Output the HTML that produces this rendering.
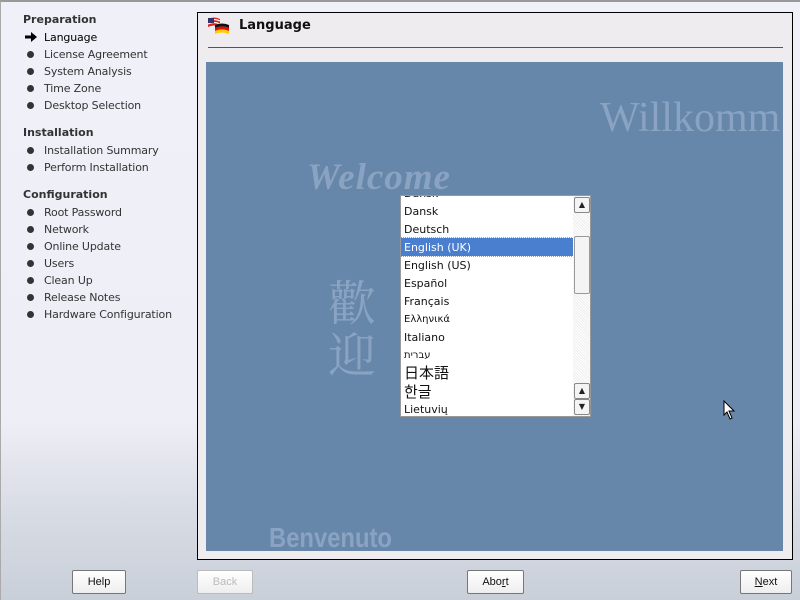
<!DOCTYPE html>
<html><head><meta charset="utf-8"><style>
*{margin:0;padding:0;box-sizing:border-box}
body{width:800px;height:600px;overflow:hidden;position:relative;font-family:"DejaVu Sans","Liberation Sans",sans-serif;background:linear-gradient(#f0f0f8 0%,#eeeef6 70%,#d8dce4 85%,#c9cfd9 100%);color:#222}
.frame{position:absolute;left:0;top:0;width:800px;height:600px;border-top:2px solid #999;border-left:1px solid #aaa}
.h{position:absolute;left:23px;font-weight:bold;font-size:11px;color:#333;top:0}
.it{position:absolute;left:44px;font-size:11px;color:#333;letter-spacing:-0.15px}
.dot{position:absolute;left:27px;width:7px;height:7px;border-radius:50%;background:#333}
.panel{position:absolute;left:197px;top:12px;width:596px;height:548px;border:1px solid #000;background:#efecef}
.title{position:absolute;left:239px;top:18px;font-weight:bold;font-size:13px;color:#111}
.rule{position:absolute;left:208px;top:47px;width:575px;height:1px;background:#555}
.blue{position:absolute;left:206px;top:62px;width:577px;height:489px;background:#6686aa;overflow:hidden}
.wm{position:absolute;color:#8aa3c2;font-family:"Liberation Serif",serif;white-space:nowrap}
.list{position:absolute;left:400px;top:195px;width:191px;height:222px;background:#fff;border:1px solid #999;overflow:hidden}
.row{position:absolute;left:0;width:172px;height:18px;font-size:11px;padding-left:3px;line-height:20px;color:#111}
.sel{background:#4a7fd0;color:#fff;outline:1px dotted #d8a040}
.sb{position:absolute;left:172px;top:0;width:18px;height:220px;background:repeating-linear-gradient(45deg,#eee 0 1px,#fff 1px 2px)}
.arr{position:absolute;left:1px;width:16px;height:16px;border:1px solid #888;border-radius:2px;background:#f4f4f4;font-size:8px;text-align:center;line-height:14px}
.btn{position:absolute;top:570px;height:24px;border:1px solid #777;border-radius:2px;background:linear-gradient(#fff,#eee);font-family:"Liberation Sans",sans-serif;font-size:11px;text-align:center;line-height:22px;color:#111}
</style></head><body>
<div class="frame"></div>
<div class="h" style="top:13px">Preparation</div>
<svg style="position:absolute;left:24px;top:31px" width="14" height="12"><path d="M1 4.5 H7 V1 L13 6 L7 11 V7.5 H1Z" fill="#000"/></svg>
<div class="it" style="top:31px;color:#000">Language</div>
<div class="dot" style="top:51px"></div><div class="it" style="top:48px">License Agreement</div>
<div class="dot" style="top:68px"></div><div class="it" style="top:65px">System Analysis</div>
<div class="dot" style="top:85px"></div><div class="it" style="top:82px">Time Zone</div>
<div class="dot" style="top:102px"></div><div class="it" style="top:99px">Desktop Selection</div>
<div class="h" style="top:126px">Installation</div>
<div class="dot" style="top:147px"></div><div class="it" style="top:144px">Installation Summary</div>
<div class="dot" style="top:164px"></div><div class="it" style="top:161px">Perform Installation</div>
<div class="h" style="top:188px">Configuration</div>
<div class="dot" style="top:209px"></div><div class="it" style="top:206px">Root Password</div>
<div class="dot" style="top:226px"></div><div class="it" style="top:223px">Network</div>
<div class="dot" style="top:243px"></div><div class="it" style="top:240px">Online Update</div>
<div class="dot" style="top:260px"></div><div class="it" style="top:257px">Users</div>
<div class="dot" style="top:277px"></div><div class="it" style="top:274px">Clean Up</div>
<div class="dot" style="top:294px"></div><div class="it" style="top:291px">Release Notes</div>
<div class="dot" style="top:311px"></div><div class="it" style="top:308px">Hardware Configuration</div>

<div class="panel"></div>
<svg style="position:absolute;left:207px;top:16px" width="24" height="20" viewBox="0 0 24 20">
<path d="M1 3 Q7 0 13 3 L13 11 Q7 8 1 11Z" fill="#d22"/><path d="M1 5 Q7 2 13 5 M1 8 Q7 5 13 8" stroke="#fff" stroke-width="1.2" fill="none"/><rect x="1" y="2" width="6" height="5" fill="#336"/>
<path d="M8 9 Q15 6 22 9 L22 12 Q15 9 8 12Z" fill="#111"/><path d="M8 12 Q15 9 22 12 L22 15 Q15 12 8 15Z" fill="#d11"/><path d="M8 15 Q15 12 22 15 L22 18 Q15 15 8 18Z" fill="#fc0"/></svg>
<div class="title">Language</div>
<div class="rule"></div>
<div class="blue">
<div class="wm" style="left:394px;top:32px;font-size:42px">Willkomm</div>
<div class="wm" style="left:101px;top:94px;font-size:37px;font-weight:bold;font-style:italic;letter-spacing:1px">Welcome</div>
<div class="wm" style="left:122px;top:212px;font-size:48px;line-height:52px;font-family:'Noto Serif CJK SC',serif">歡<br>迎</div>
<div class="wm" style="left:63px;top:460px;font-size:28px;font-weight:bold;font-family:'Liberation Sans',sans-serif;transform:scaleX(.85);transform-origin:left">Benvenuto</div>
</div>
<div class="list">
<div class="row" style="top:-12px">Dansk</div>
<div class="row" style="top:6px">Dansk</div>
<div class="row" style="top:24px">Deutsch</div>
<div class="row sel" style="top:42px">English (UK)</div>
<div class="row" style="top:60px">English (US)</div>
<div class="row" style="top:78px">Español</div>
<div class="row" style="top:96px">Français</div>
<div class="row" style="top:114px;font-size:10px">Ελληνικά</div>
<div class="row" style="top:132px">Italiano</div>
<div class="row" style="top:150px;font-size:10px">עברית</div>
<div class="row" style="top:167px;font-size:15px;font-family:'Noto Sans CJK JP',sans-serif">日本語</div>
<div class="row" style="top:186px;font-size:15px;font-family:'Noto Sans CJK KR',sans-serif">한글</div>
<div class="row" style="top:204px">Lietuvių</div>
<div class="sb">
<div class="arr" style="top:1px">▲</div>
<div style="position:absolute;left:1px;top:40px;width:16px;height:58px;border:1px solid #999;border-radius:2px;background:#f4f4f4"></div>
<div class="arr" style="top:187px">▲</div>
<div class="arr" style="top:203px">▼</div>
</div></div>
<svg style="position:absolute;left:723px;top:400px" width="12" height="20"><path d="M1 1 L1 15 L4 12 L7 19 L9 18 L6 11 L11 11Z" fill="#fff" stroke="#000"/></svg>

<div class="btn" style="left:72px;width:54px">Help</div>
<div class="btn" style="left:197px;width:56px;color:#bbb;border-color:#bbb">Back</div>
<div class="btn" style="left:467px;width:57px">Abo<u>r</u>t</div>
<div class="btn" style="left:740px;width:52px"><u>N</u>ext</div>
</body></html>
